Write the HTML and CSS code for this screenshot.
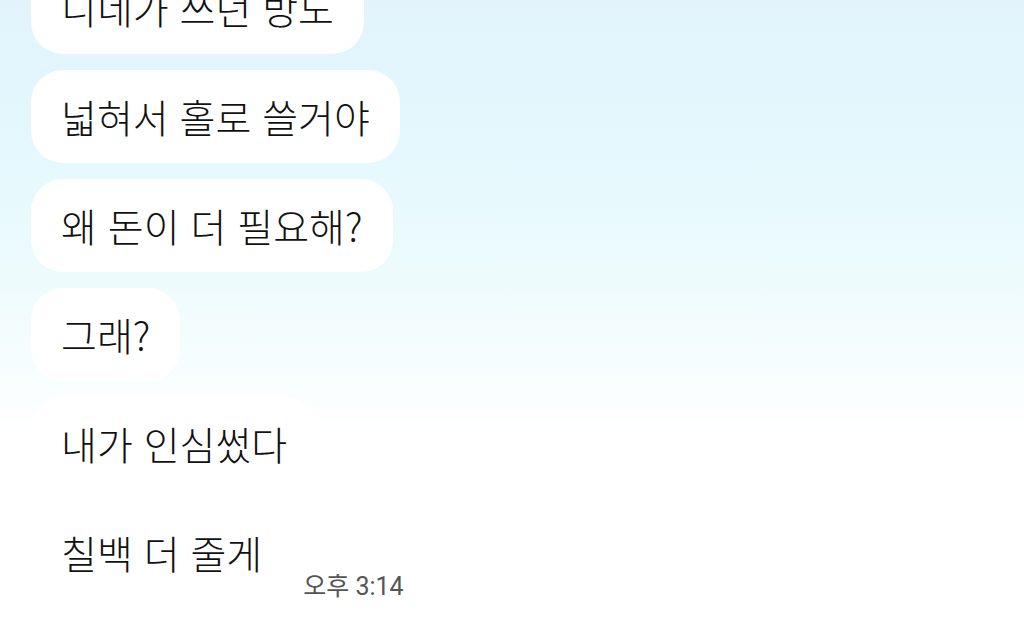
FILE: index.html
```html
<!DOCTYPE html>
<html lang="ko">
<head>
<meta charset="UTF-8">
<meta name="viewport" content="width=device-width, initial-scale=1.0">
<title>채팅</title>
<link rel="stylesheet" href="styles.css">
</head>
<body>
    <div class="chat">
        <div class="row"><div class="bubble">니네가 쓰던 방도</div></div>
        <div class="row"><div class="bubble">넓혀서 홀로 쓸거야</div></div>
        <div class="row"><div class="bubble">왜 돈이 더 필요해?</div></div>
        <div class="row"><div class="bubble">그래?</div></div>
        <div class="row"><div class="bubble">내가 인심썼다</div></div>
        <div class="row">
            <div class="bubble">칠백 더 줄게</div>
            <span class="time">오후 3:14</span>
        </div>
    </div>
</body>
</html>
```

FILE: styles.css
```css
html, body {
    margin: 0;
    height: 100%;
}

body {
    background: linear-gradient(#e2f3fc 0, #e4f8fd 150px, #edfbfd 270px, #f6fdfe 360px, #ffffff 435px);
    font-family: "Noto Sans CJK KR", "Noto Sans", sans-serif;
    color: #111;
    overflow: hidden;
}

.chat {
    display: flex;
    flex-direction: column;
    gap: 16px;
    padding-left: 31px;
    margin-top: -39px; /* first bubble is cut off at the top */
}

.row {
    display: flex;
    align-items: flex-end;
    gap: 11px;
}

.bubble {
    background-color: #fff;
    border-radius: 32px;
    padding: 20px 30px;
    font-size: 39px;
    font-weight: 300;
    line-height: 53px;
    white-space: nowrap;
}

.time {
    font-family: Roboto, "Noto Sans CJK KR", sans-serif;
    font-size: 25px;
    line-height: 24px;
    color: #555;
}
```
